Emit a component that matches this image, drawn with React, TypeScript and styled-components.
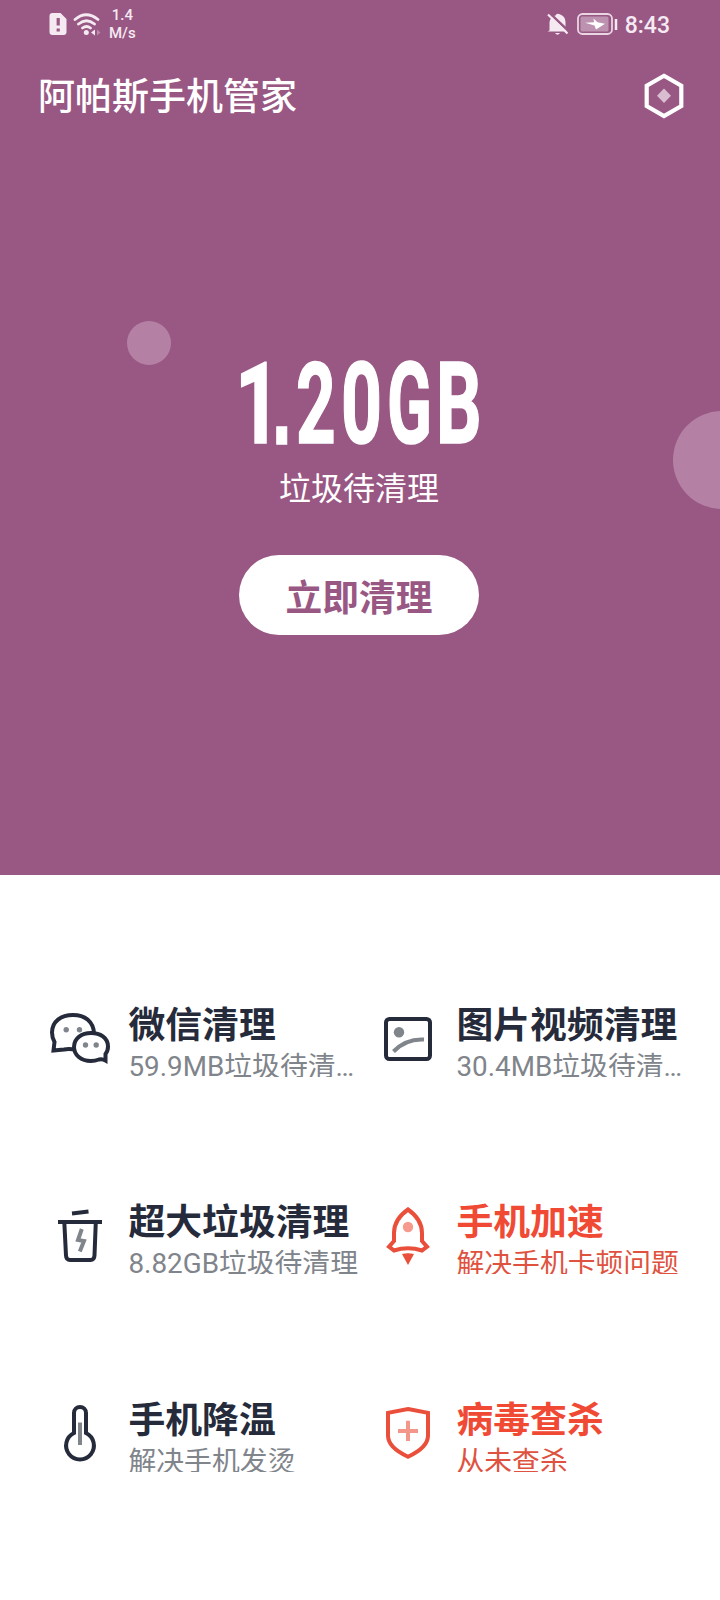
import React from 'react';
import styled, { createGlobalStyle } from 'styled-components';

const Global = createGlobalStyle`
  * { box-sizing: border-box; }
  body { margin: 0; background: #fff; font-family: Roboto, "Noto Sans CJK SC", sans-serif; }
`;

const Screen = styled.div`
  width: 720px;
  height: 1600px;
  overflow: hidden;
  background: #fff;
`;

const Hero = styled.section`
  position: relative;
  height: 875px;
  overflow: hidden;
  background: #995783;
  color: #fff;
`;

const StatusBar = styled.div`
  display: flex;
  align-items: center;
  justify-content: space-between;
  height: 48px;
  padding: 0 50px 0 49px;
  color: #f5eaf2;
`;

const StatusGroup = styled.div`
  display: flex;
  align-items: center;
`;

const Speed = styled.div`
  margin-left: 8px;
  font-size: 15px;
  font-weight: 500;
  line-height: 18px;
  text-align: center;
`;

const Clock = styled.div`
  margin-left: 7px;
  padding-top: 3px;
  font-size: 23px;
  font-weight: 500;
  line-height: 26px;
`;

const TitleBar = styled.header`
  display: flex;
  align-items: center;
  justify-content: space-between;
  height: 96px;
  padding: 0 35px 0 38px;
`;

const Title = styled.h1`
  margin: 0;
  padding-top: 4px;
  font-size: 37px;
  font-weight: 500;
  line-height: 54px;
`;

const Bubble = styled.div<{ $x: number; $y: number; $size: number }>`
  position: absolute;
  left: ${p => p.$x}px;
  top: ${p => p.$y}px;
  width: ${p => p.$size}px;
  height: ${p => p.$size}px;
  border-radius: 50%;
  background: #b481a5;
`;

const Summary = styled.div`
  display: flex;
  flex-direction: column;
  align-items: center;
  padding: 193px 2px 0 0;
`;

const Amount = styled.div`
  display: flex;
  height: 137px;
  width: 248px;
  font-size: 113.5px;
  font-weight: 700;
  line-height: 136px;
  -webkit-text-stroke: 1.6px #fff;
`;

const Glyph = styled.span<{ $w: number; $scale: number; $square?: boolean }>`
  width: ${p => p.$w}px;
  flex: none;
  font-family: ${p => (p.$square ? '"Liberation Sans", sans-serif' : 'inherit')};
  white-space: nowrap;
  transform: scaleX(${p => p.$scale});
  transform-origin: 0 50%;
`;

const Caption = styled.div`
  margin-top: -8px;
  font-size: 32px;
  line-height: 46px;
`;

const CleanButton = styled.button`
  width: 240px;
  height: 80px;
  margin-top: 43px;
  padding: 0 0 1px;
  border: 0;
  border-radius: 40px;
  background: #fff;
  color: #995783;
  font-family: inherit;
  font-size: 36.7px;
  font-weight: 700;
`;

const Grid = styled.main`
  display: grid;
  grid-template-columns: 328px 328px;
  grid-auto-rows: 197.3px;
  padding: 65px 32px 0 48px;
`;

const Tile = styled.div`
  display: flex;
  align-items: center;
`;

const IconBox = styled.div`
  flex: none;
  width: 64px;
  height: 64px;
  margin-right: 16.5px;
`;

const TileText = styled.div`
  flex: none;
  width: 232px;
  padding-top: 2px;
`;

const TileName = styled.div<{ $hot?: boolean }>`
  padding-top: 2px;
  color: ${p => (p.$hot ? '#f04a35' : '#262b3c')};
  font-size: 36.8px;
  font-weight: 700;
  line-height: 44px;
  white-space: nowrap;
`;

const TileNote = styled.div<{ $hot?: boolean }>`
  height: 29px;
  overflow: hidden;
  color: ${p => (p.$hot ? '#e05240' : '#80848b')};
  font-size: 27.8px;
  line-height: 37px;
  white-space: nowrap;
`;

const SimIcon = () => (
  <svg width="18" height="22" viewBox="-0.5 0 18 22">
    <path d="M3 0H11L17 6V19Q17 22 14 22H3Q0 22 0 19V3Q0 0 3 0Z" fill="currentColor" />
    <path d="M8.700 5V12.500M8.700 15.500V18.500" stroke="#995783" strokeWidth="3.200" />
  </svg>
);

const WifiIcon = () => (
  <svg width="28" height="24" viewBox="0 0 28 24" fill="none" stroke="currentColor" strokeWidth="2.8" strokeLinecap="round" style={{ marginLeft: 6 }}>
    <path d="M2 7.500Q13 -2 25 7.500M5.500 12Q13.500 5.500 21.500 12M9.500 16Q13.500 13 17.500 16" />
    <circle cx="13.300" cy="20.500" r="2.500" fill="currentColor" stroke="none" />
    <path d="M22 17.500V23.500L18 20.500Z" fill="currentColor" stroke="none" />
    <path d="M24 17.500V23.500L27.500 20.500Z" fill="#b98aad" stroke="none" />
  </svg>
);

const MutedIcon = () => (
  <svg width="22" height="23" viewBox="0 0 22 23">
    <path d="M2.500 17.500V9Q3.500 3.500 8.500 2.500Q9.500 0 12 1Q18.500 3 18.500 9V15L20.500 18.500H0.500Z" fill="currentColor" />
    <path d="M8 20H13Q10.500 23.500 8 20Z" fill="currentColor" />
    <path d="M2.500 0L22 18.500" stroke="#995783" strokeWidth="2.500" />
    <path d="M1 1.500L20.500 20.500" stroke="currentColor" strokeWidth="2.200" />
  </svg>
);

const BatteryIcon = () => (
  <svg width="41" height="22" viewBox="0 0 41 22" style={{ marginLeft: 8 }}>
    <rect x="1" y="1" width="34" height="20" rx="4.500" fill="none" stroke="#ead6e3" strokeWidth="1.800" />
    <rect x="3.500" y="3.500" width="28" height="15" rx="1.500" fill="#bd91b0" />
    <path d="M8 9.700L17 9.200L16.500 5.500L20.500 9.200L28 10.800L19 16.500L17.500 12.500Z" fill="#fff" />
    <path d="M39 6V17" stroke="currentColor" strokeWidth="2.500" />
  </svg>
);

const HexIcon = () => (
  <svg width="42" height="46" viewBox="0 0 42 46">
    <path d="M21 2.800L38.300 12.700V33L21 43L3.700 33V12.700Z" fill="none" stroke="#fff" strokeWidth="4.200" />
    <path d="M21 15.500L28 22.800L21 30L14 22.800Z" fill="#d8bed0" />
  </svg>
);

const dark = { fill: 'none', stroke: '#262b3c', strokeWidth: 4 };
const red = { fill: 'none', stroke: '#e94f3a', strokeWidth: 4 };

const WechatIcon = () => (
  <svg width="64" height="64" viewBox="0 0 64 64" {...dark}>
    <path d="M28 43Q22 41.500 16 42.500L5.500 43.500L6.500 35Q4 30.500 4 25.500C4 14.500 13 8 25 8C37 8 45.500 14.500 46 26.500" />
    <path d="M43 26C52 26 60 30.500 60 39.500Q60 44 57.500 47V53.500Q54 51.500 51 52.500Q47 54 43 54C33 54 26 48 26 40C26 31 34 26 43 26Z" fill="#fff" />
    <g fill="#80848b" stroke="none"><circle cx="18.200" cy="22.700" r="2.700" /><circle cx="31.500" cy="22.700" r="2.700" /><circle cx="37.500" cy="38" r="2.700" /><circle cx="48.200" cy="38" r="2.700" /></g>
  </svg>
);

const PictureIcon = () => (
  <svg width="64" height="64" viewBox="0 0 64 64" {...dark}>
    <rect x="10" y="12" width="44" height="40" rx="3.500" />
    <circle cx="23" cy="25.200" r="5.200" fill="#80848b" stroke="none" />
    <path d="M17.500 44.500Q30 31.500 48 32.500" stroke="#80848b" />
  </svg>
);

const TrashIcon = () => (
  <svg width="64" height="64" viewBox="0 0 64 64" {...dark}>
    <path d="M24 9.500L40.500 7.500M10 18H54M16.300 18L18 51.500Q18.200 56 22 56H42.500Q46.300 56 46.500 51.500L47.800 18" />
    <path d="M33.800 25L30 36L36 37L31.800 47.500" stroke="#80848b" strokeWidth="4" />
  </svg>
);

const RocketIcon = () => (
  <svg width="64" height="64" viewBox="0 0 64 64" {...red}>
    <path d="M32 5.500C42 12.500 46 20 46 29V37L51 42.700L46 46.500Q32 42 18 46.500L13 42.700L18 37V29C18 20 22 12.500 32 5.500Z" />
    <circle cx="32" cy="23" r="5.200" fill="#f69a8d" stroke="none" />
    <path d="M26 50Q32 48.500 38 50L32 61Z" fill="#e94f3a" stroke="none" />
  </svg>
);

const ThermometerIcon = () => (
  <svg width="64" height="64" viewBox="0 0 64 64" {...dark}>
    <path d="M26 32V12A6 6 0 0 1 38 12V32A13.900 13.900 0 1 1 26 32Z" />
    <path d="M32 21.500V44" stroke="#80848b" />
  </svg>
);

const ShieldIcon = () => (
  <svg width="64" height="64" viewBox="0 0 64 64" {...red}>
    <path d="M32 8L52 11.800V34.500Q52 46.500 32 55.700Q12 46.500 12 34.500V11.800Z" />
    <path d="M32 19.700V40M22 29.900H42" stroke="#f3978b" />
  </svg>
);

const tiles = [
  { name: '微信清理', note: '59.9MB垃圾待清…', Icon: WechatIcon },
  { name: '图片视频清理', note: '30.4MB垃圾待清…', Icon: PictureIcon },
  { name: '超大垃圾清理', note: '8.82GB垃圾待清理', Icon: TrashIcon },
  { name: '手机加速', note: '解决手机卡顿问题', Icon: RocketIcon, hot: true },
  { name: '手机降温', note: '解决手机发烫', Icon: ThermometerIcon },
  { name: '病毒查杀', note: '从未查杀', Icon: ShieldIcon, hot: true },
];

const amount = [
  { ch: '1', w: 37, scale: 0.7 },
  { ch: '.', w: 24, scale: 0.62, square: true },
  { ch: '2', w: 45, scale: 0.61 },
  { ch: '0', w: 46, scale: 0.63 },
  { ch: 'G', w: 49, scale: 0.58 },
  { ch: 'B', w: 45, scale: 0.63 },
];

export default function App() {
  return (
    <Screen>
      <Global />
      <Hero>
        <StatusBar>
          <StatusGroup>
            <SimIcon />
            <WifiIcon />
            <Speed>1.4<br />M/s</Speed>
          </StatusGroup>
          <StatusGroup>
            <MutedIcon />
            <BatteryIcon />
            <Clock>8:43</Clock>
          </StatusGroup>
        </StatusBar>
        <TitleBar>
          <Title>阿帕斯手机管家</Title>
          <HexIcon />
        </TitleBar>
        <Bubble $x={127} $y={321} $size={44} />
        <Bubble $x={673} $y={411} $size={98} />
        <Summary>
          <Amount>
            {amount.map(g => <Glyph key={g.ch} $w={g.w} $scale={g.scale} $square={g.square}>{g.ch}</Glyph>)}
          </Amount>
          <Caption>垃圾待清理</Caption>
          <CleanButton>立即清理</CleanButton>
        </Summary>
      </Hero>
      <Grid>
        {tiles.map(({ name, note, Icon, hot }) => (
          <Tile key={name}>
            <IconBox><Icon /></IconBox>
            <TileText>
              <TileName $hot={hot}>{name}</TileName>
              <TileNote $hot={hot}>{note}</TileNote>
            </TileText>
          </Tile>
        ))}
      </Grid>
    </Screen>
  );
}
